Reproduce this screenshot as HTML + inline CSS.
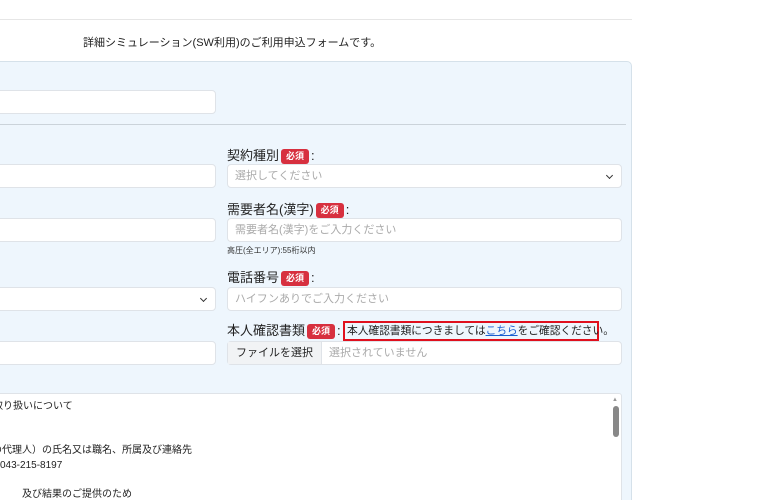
<!DOCTYPE html>
<html><head><meta charset="utf-8"><style>
*{box-sizing:border-box;margin:0;padding:0}
html{width:770px;height:500px;overflow:hidden}
body{width:770px;height:500px;overflow:hidden;background:#fff;font-family:"Liberation Sans","Noto Sans CJK JP",sans-serif;color:#222;position:relative}
.a{position:absolute}
.inp{position:absolute;background:#fff;border:1px solid #dfe3e8;border-radius:4px;height:24px;font-size:11px;color:#aaa;padding:5px 7px;line-height:13px}
.lbl{position:absolute;font-size:13px;color:#222;white-space:nowrap;line-height:16px}
.b{display:inline-block;background:#d7303f;color:#fff;font-size:9px;font-weight:bold;border-radius:3px;padding:1px 5px;line-height:13px;vertical-align:1px;margin:0 2px}
.chev{position:absolute;right:9px;top:8px;width:5px;height:5px;border-right:1.3px solid #333;border-bottom:1.3px solid #333;transform:rotate(45deg)}
</style></head><body>
<div class="a" style="left:0;top:19px;width:632px;height:1px;background:#e6e6e6"></div>
<div class="a" style="left:83px;top:36px;font-size:11px;line-height:14px">詳細シミュレーション(SW利用)のご利用申込フォームです。</div>
<div class="a" style="left:-10px;top:61px;width:642px;height:450px;background:#eef6fd;border:1px solid #d5e1ea;border-radius:5px"></div>
<div class="inp" style="left:-5px;top:90px;width:221px"></div>
<div class="a" style="left:0;top:124px;width:626px;height:1px;background:#cbd3da"></div>
<div class="inp" style="left:-5px;top:164px;width:221px"></div>
<div class="inp" style="left:-5px;top:218px;width:221px"></div>
<div class="inp" style="left:-5px;top:287px;width:221px"><span class="chev"></span></div>
<div class="inp" style="left:-5px;top:341px;width:221px"></div>

<div class="lbl" style="left:227px;top:148px">契約種別<span class="b">必須</span>:</div>
<div class="inp" style="left:227px;top:164px;width:395px">選択してください<span class="chev"></span></div>
<div class="lbl" style="left:227px;top:202px">需要者名(漢字)<span class="b">必須</span>:</div>
<div class="inp" style="left:227px;top:218px;width:395px">需要者名(漢字)をご入力ください</div>
<div class="a" style="left:227px;top:245px;font-size:8px;color:#333">高圧(全エリア):55桁以内</div>
<div class="lbl" style="left:227px;top:270px">電話番号<span class="b">必須</span>:</div>
<div class="inp" style="left:227px;top:287px;width:395px">ハイフンありでご入力ください</div>
<div class="lbl" style="left:227px;top:323px">本人確認書類<span class="b">必須</span>:</div>
<div class="a" style="left:343px;top:321px;width:256px;height:20px;border:2px solid #e0101e;font-size:10.8px;line-height:16px;padding-left:2px;white-space:nowrap;letter-spacing:-0.1px">本人確認書類につきましては<span style="color:#1a5fd0;text-decoration:underline">こちら</span>をご確認ください。</div>
<div class="inp" style="left:227px;top:341px;width:395px;padding:0;display:flex"><span style="background:#f1f3f5;color:#222;border-right:1px solid #dfe3e8;padding:5px 8px;font-size:11px">ファイルを選択</span><span style="padding:5px 7px">選択されていません</span></div>

<div class="a" style="left:-5px;top:393px;width:627px;height:120px;background:#fff;border:1px solid #dfe3e8;border-radius:3px;font-size:10px;line-height:14.7px;color:#222;padding:6px 0 0 0;overflow:hidden;white-space:nowrap">
<div style="margin-left:-3px">取り扱いについて</div><div>&nbsp;</div><div>&nbsp;</div>
<div style="margin-left:-4px">の代理人）の氏名又は職名、所属及び連絡先</div>
<div style="margin-left:4px">043-215-8197</div><div>&nbsp;</div><div style="margin-left:26px">及び結果のご提供のため</div>
</div>
<div class="a" style="left:612px;top:397px;font-size:6px;color:#999">▲</div>
<div class="a" style="left:613px;top:406px;width:6px;height:31px;background:#888;border-radius:3px"></div>
</body></html>
